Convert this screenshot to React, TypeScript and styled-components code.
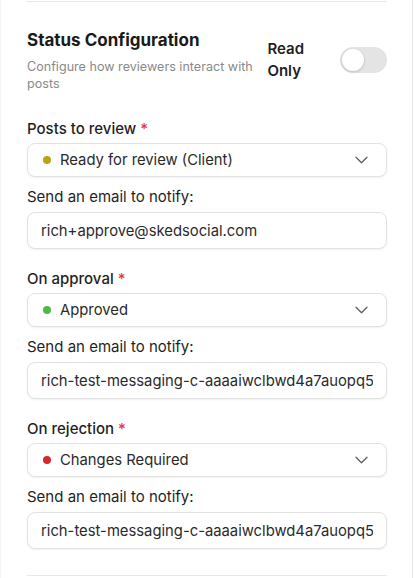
import React from "react";
import styled, { createGlobalStyle } from "styled-components";

type Status = { label: string; color: string };

type Section = {
  title: string;
  status: Status;
  email: string;
};

const sections: Section[] = [
  {
    title: "Posts to review",
    status: { label: "Ready for review (Client)", color: "#b9a316" },
    email: "rich+approve@skedsocial.com",
  },
  {
    title: "On approval",
    status: { label: "Approved", color: "#4fb94a" },
    email: "rich-test-messaging-c-aaaaiwclbwd4a7auopq5rmxq@skedsocial.slack.com",
  },
  {
    title: "On rejection",
    status: { label: "Changes Required", color: "#d42a2a" },
    email: "rich-test-messaging-c-aaaaiwclbwd4a7auopq5rmxq@skedsocial.slack.com",
  },
];

const GlobalStyle = createGlobalStyle`
  * { box-sizing: border-box; }
  body {
    margin: 0;
    background: #ffffff;
    font-family: Inter, "Noto Sans", "Liberation Sans", sans-serif;
    color: #1f1f1f;
  }
`;

const Chevron = () => (
  <svg width="13" height="8" viewBox="0 0 13 8" fill="none">
    <path d="M1 1.2l5.5 5.5 5.5-5.5" stroke="#5f5f5f" strokeWidth="1.3" strokeLinecap="round" strokeLinejoin="round" />
  </svg>
);

export default function App(): JSX.Element {
  return (
    <>
      <GlobalStyle />
      <Panel>
        <Divider />
        <Header>
          <HeaderText>
            <Title>Status Configuration</Title>
            <Subtitle>Configure how reviewers interact with posts</Subtitle>
          </HeaderText>
          <ReadOnly>
            <ReadOnlyLabel>
              Read
              <br />
              Only
            </ReadOnlyLabel>
            <Toggle>
              <Knob />
            </Toggle>
          </ReadOnly>
        </Header>
        {sections.map((s) => (
          <Group key={s.title}>
            <Label>
              {s.title} <Required>*</Required>
            </Label>
            <Select>
              <Dot $color={s.status.color} />
              <SelectText>{s.status.label}</SelectText>
              <Chevron />
            </Select>
            <NotifyLabel>Send an email to notify:</NotifyLabel>
            <Input readOnly value={s.email} />
          </Group>
        ))}
        <BottomDivider />
      </Panel>
    </>
  );
}

const Panel = styled.div`
  width: 413px;
  height: 578px;
  overflow: hidden;
  padding: 0 25px 0 26px;
  border-left: 1px solid #f4f4f4;
  border-right: 1px solid #e6e6e6;
  background: #fff;
`;

const Divider = styled.div`
  height: 1px;
  margin-top: 1px;
  background: #e8e8e8;
`;

const BottomDivider = styled(Divider)`
  margin-top: 26px;
`;

const Header = styled.div`
  display: flex;
  align-items: flex-start;
  justify-content: space-between;
  padding-top: 27px;
  margin-bottom: 27px;
`;

const HeaderText = styled.div`
  width: 232px;
`;

const Title = styled.h2`
  margin: 0 0 7px;
  font-size: 17px;
  font-weight: 700;
  line-height: 22px;
  color: #1a1a1a;
`;

const Subtitle = styled.p`
  margin: 0;
  font-size: 12.6px;
  line-height: 17px;
  color: #8a8a8a;
`;

const ReadOnly = styled.div`
  display: flex;
  align-items: flex-start;
  gap: 36px;
  padding-top: 9px;
`;

const ReadOnlyLabel = styled.span`
  font-size: 15px;
  font-weight: 600;
  line-height: 22px;
  color: #1f1f1f;
`;

const Toggle = styled.div`
  width: 47px;
  height: 26px;
  margin-top: 9px;
  border-radius: 13px;
  background: #e4e4e4;
  padding: 2px;
  display: flex;
  align-items: center;
`;

const Knob = styled.div`
  width: 22px;
  height: 22px;
  border-radius: 50%;
  background: #fff;
  box-shadow: 0 1px 3px rgba(0, 0, 0, 0.18);
`;

const Group = styled.div`
  display: flex;
  flex-direction: column;
  & + & {
    margin-top: 20px;
  }
`;

const Label = styled.div`
  font-size: 15px;
  font-weight: 500;
  line-height: 20px;
  color: #1f1f1f;
  margin-bottom: 4px;
`;

const Required = styled.span`
  color: #e53935;
`;

const NotifyLabel = styled(Label)`
  font-weight: 400;
  margin-top: 10px;
  margin-bottom: 5px;
`;

const Select = styled.div`
  height: 34px;
  display: flex;
  align-items: center;
  padding: 0 18px 0 15px;
  border: 1px solid #e2e2e2;
  border-radius: 8px;
  box-shadow: 0 1px 2px rgba(0, 0, 0, 0.06);
  background: #fff;
`;

const Dot = styled.span<{ $color: string }>`
  width: 8px;
  height: 8px;
  border-radius: 50%;
  background: ${(p) => p.$color};
  margin-right: 9px;
`;

const SelectText = styled.span`
  flex: 1;
  font-size: 14.8px;
  color: #2a2a2a;
`;

const Input = styled.input`
  height: 37px;
  width: 100%;
  padding: 0 13px;
  border: 1px solid #e2e2e2;
  border-radius: 8px;
  box-shadow: 0 1px 2px rgba(0, 0, 0, 0.06);
  font-family: inherit;
  font-size: 14.8px;
  color: #2a2a2a;
  outline: none;
  background: #fff;
`;
